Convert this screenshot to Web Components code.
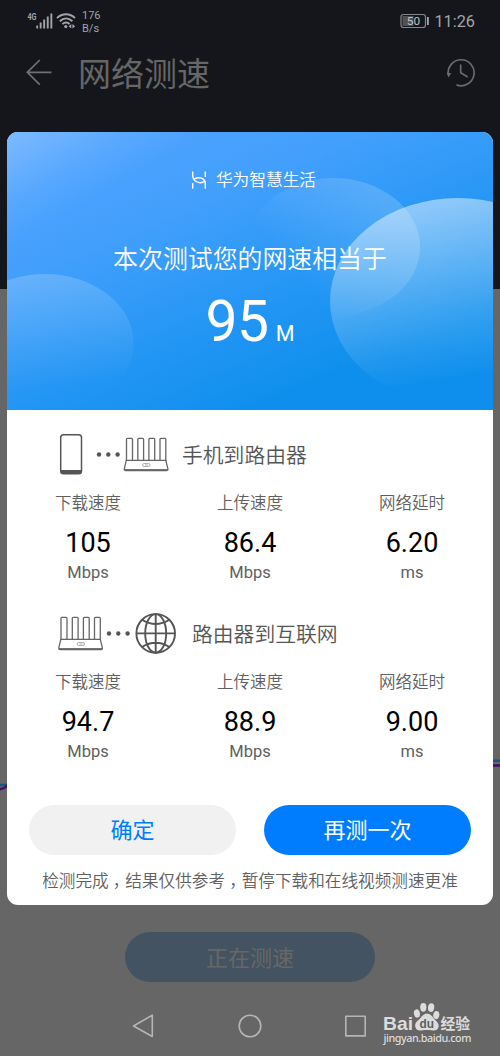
<!DOCTYPE html>
<html lang="zh-CN">
<head>
<meta charset="utf-8">
<title>网络测速</title>
<style>
html,body{margin:0;padding:0;overflow:hidden}
body{font-family:Roboto,"Noto Sans CJK SC",sans-serif;background:#666}
</style>
</head>
<body>
<speed-page></speed-page>
<script>
const define = (name, html) => {
  const t = document.createElement('template');
  t.innerHTML = html;
  customElements.define(name, class extends HTMLElement {
    constructor() {
      super();
      this.attachShadow({ mode: 'open' }).appendChild(t.content.cloneNode(true));
    }
  });
};

define('status-bar', `
<style>
:host{display:flex;height:42px;box-sizing:border-box;padding:0 25px 0 27px;align-items:center;color:#a3a4a6}
.rate{font-size:11px;line-height:13px;margin-left:5px;padding-top:1px}
.sp{flex:1}
.time{font-size:16.3px;line-height:20px;margin-left:5px;padding-top:1px}
svg{display:block}
text{font-family:Roboto,sans-serif}
</style>
<svg width="50" height="42" viewBox="27 0 50 42" fill="#a3a4a6">
  <text x="27.5" y="20" font-size="8.5" font-weight="700" textLength="9" lengthAdjust="spacingAndGlyphs">4G</text>
  <rect x="36.3" y="25.5" width="1.8" height="3"/><rect x="39.7" y="22.5" width="1.9" height="6"/><rect x="43.2" y="19.5" width="1.9" height="9"/><rect x="46.8" y="16.5" width="1.9" height="12"/><rect x="50.4" y="13.5" width="1.9" height="15"/>
  <g fill="none" stroke="#a3a4a6" stroke-width="1.9"><path d="M57 18.2C62 13 70 13 75 18.2M59.8 21.2c3.8-3.6 8.8-3.6 12.6 0M62.4 24c2.4-2 5-2 7.2 0"/></g>
  <circle cx="65.8" cy="26.6" r="1.6"/><path d="M71.3 24v4.6L68.6 26.3zM72.4 24v4.6l2.8-2.3z"/>
</svg>
<div class="rate">176<br>B/s</div>
<div class="sp"></div>
<svg width="29" height="16" viewBox="401 13 29 16">
  <rect x="402" y="14.5" width="24.5" height="13" rx="2.5" fill="none" stroke="#85868a" stroke-width="1.2"/>
  <rect x="403.5" y="16" width="11" height="10" fill="#505155"/>
  <rect x="428" y="17" width="1.800" height="8" fill="#a3a4a6"/>
  <text x="414.500" y="25.300" font-size="11.800" text-anchor="middle" fill="#c0c0c1">50</text>
</svg>
<div class="time">11:26</div>`);

define('title-bar', `
<style>
:host{display:flex;height:62px;padding:0 25px 0 26px;align-items:center;color:#666}
h1{margin:0 0 0 26px;padding-top:4px;font-size:33px;line-height:40px;font-weight:400;flex:1}
svg{display:block}
</style>
<svg width="26" height="28" viewBox="26 59 26 28" fill="none" stroke="#707072" stroke-width="1.700"><path d="M51.500 72.300H27.500M39.800 60 27.300 72.300 39.800 84.600"/></svg>
<h1>网络测速</h1>
<svg width="30" height="30" viewBox="445 58 30 30" fill="none" stroke="#6b6b6d" stroke-width="1.700"><path d="M448.300 75A13 13 0 1 1 456.500 84.900"/><path d="M460.700 64.500v8.200l7 4.200"/><path d="M446.800 72.500l4.500.7-3 4.300z" fill="#6b6b6d" stroke="none"/></svg>`);

define('trace-chart', `
<style>:host{display:block;height:643px}svg{display:block}</style>
<svg width="500" height="643" viewBox="0 289 500 643" fill="none" stroke-width="2.500">
  <path d="M0 785h12M490 760.800h10" stroke="#19557c"/>
  <path d="M0 789.300C4 789 5.500 787 8 785M490 765.600h10" stroke="#430b70"/>
</svg>`);

define('busy-button', `
<style>:host{display:block;width:250px;height:50px;box-sizing:border-box;padding-top:2px;line-height:50px;margin:0 auto;border-radius:25px;background:#445362;color:#686766;text-align:center;font-size:22px}</style>
<slot></slot>`);

define('nav-bar', `
<style>:host{display:block;height:60px;margin-top:14px}svg{display:block}</style>
<svg width="500" height="60" viewBox="0 996 500 60" fill="none" stroke="#b5b5b5" stroke-width="1.600" stroke-linejoin="round">
  <path d="M152.300 1015.200v21.300L133.500 1026z"/><circle cx="250" cy="1026" r="10.800"/><rect x="345.800" y="1016.300" width="19.400" height="19.600"/>
</svg>`);

define('site-mark', `
<style>
:host{display:block;width:94px;height:46px}
svg{display:block}
</style>
<svg width="94" height="46" viewBox="382 1000 94 46" fill="#dcdcdc">
  <text x="383" y="1029.500" font-family="Liberation Sans" font-size="18.500" font-weight="700" textLength="30" lengthAdjust="spacingAndGlyphs">Bai</text>
  <ellipse cx="416.800" cy="1013.500" rx="3" ry="4.200" transform="rotate(-12 416.800 1013)"/>
  <ellipse cx="423.300" cy="1007.300" rx="3.100" ry="4.400"/>
  <ellipse cx="431.200" cy="1007.500" rx="3.100" ry="4.400" transform="rotate(8 431 1007)"/>
  <ellipse cx="436.300" cy="1015" rx="3" ry="4.100" transform="rotate(10 436 1015)"/>
  <path d="M427 1013.500c-4 0-5.500 4-8.500 6.500-3 2.500-4 4.500-3 7.500 1.200 3.300 4 3.200 7 2.800 3-.5 6-.5 9 0 3.500.6 6 .2 7-3 .8-3-.8-5-3.500-7.500-2.500-2.500-4-6.300-8-6.300z"/>
  <text x="419.500" y="1027.800" font-family="Liberation Sans" font-size="12.500" font-weight="700" fill="#5e5e5e" textLength="14.500" lengthAdjust="spacingAndGlyphs">du</text>
  <text x="440.500" y="1028.500" font-family="Noto Sans CJK SC" font-size="14.800" font-weight="700" textLength="29.500">经验</text>
  <text x="383.500" y="1041.800" font-family="Noto Sans" font-size="10.800" font-weight="500" textLength="88">jingyan.baidu.com</text>
</svg>`);

define('result-hero', `
<style>
:host{display:grid;height:278px;color:#fff}
svg,.c{grid-area:1/1;display:block}
.c{display:flex;flex-direction:column;align-items:center;z-index:1}
.brand{display:flex;align-items:center;gap:9px;height:24px;margin-top:36px;padding-left:7px;font-size:16.700px;font-weight:350;line-height:24px}
.brand span{padding-top:1px}
.brand svg{margin-top:-2px}
.t{margin-top:50px;font-size:24.900px;line-height:36px;font-weight:350}
.n{display:flex;align-items:baseline;gap:7px;font-size:57px;line-height:68px;margin-top:10px;letter-spacing:-.5px}
.n small{font-size:21.500px;letter-spacing:0}
</style>
<svg width="486" height="278" viewBox="0 0 486 278">
  <defs>
    <linearGradient id="bg" gradientUnits="userSpaceOnUse" x1="120" y1="-20" x2="245" y2="280"><stop offset="0" stop-color="#50a3ff"/><stop offset=".35" stop-color="#429ffc"/><stop offset=".7" stop-color="#2496f4"/><stop offset="1" stop-color="#0e8fed"/></linearGradient>
    <linearGradient id="gl" gradientUnits="userSpaceOnUse" x1="0" y1="0" x2="52" y2="88"><stop offset="0" stop-color="#fff" stop-opacity=".25"/><stop offset=".6" stop-color="#fff" stop-opacity=".07"/><stop offset="1" stop-color="#fff" stop-opacity="0"/></linearGradient>
    <linearGradient id="a" x1=".4" y1="0" x2=".5" y2=".82"><stop offset="0" stop-color="#fff" stop-opacity=".19"/><stop offset="1" stop-color="#fff" stop-opacity="0"/></linearGradient>
    <linearGradient id="m" x1=".85" y1=".25" x2=".25" y2=".65"><stop offset="0" stop-color="#fff" stop-opacity=".17"/><stop offset="1" stop-color="#fff" stop-opacity="0"/></linearGradient>
    <linearGradient id="b" x1=".4" y1="0" x2=".58" y2=".86"><stop offset="0" stop-color="#fff" stop-opacity=".48"/><stop offset=".5" stop-color="#fff" stop-opacity=".23"/><stop offset="1" stop-color="#fff" stop-opacity="0"/></linearGradient>
  </defs>
  <rect width="486" height="278" fill="url(#bg)"/>
  <rect width="486" height="278" fill="url(#gl)"/>
  <ellipse cx="38" cy="211" rx="88.500" ry="69" fill="url(#a)"/>
  <ellipse cx="326" cy="115" rx="87" ry="69" fill="url(#m)"/>
  <ellipse cx="451" cy="169" rx="128" ry="103" fill="url(#b)"/>
</svg>
<div class="c">
  <div class="brand"><svg width="16" height="19" viewBox="191 170 16 19" fill="none" stroke="#fff" stroke-width="1.400"><path d="M192.700 171.500v4c0 4.500 3.500 7.300 7.500 7.300 2.500 0 4-1 4.500-2.500M205.300 188.800v-5c0-4.500-3.500-6-7-6-2.500 0-4 1-4.500 2.200M205.300 171.500v5.500M192.700 183v5.800"/></svg><span>华为智慧生活</span></div>
  <div class="t">本次测试您的网速相当于</div>
  <div class="n"><span>95</span><small>M</small></div>
</div>`);

define('metric-cell', `
<style>
:host{display:flex;flex-direction:column;align-items:center;color:#606060;width:162px}
.l{font-size:16.500px;line-height:24px;font-weight:350}
.v{font-size:27px;line-height:34px;color:#000;margin-top:10px}
.u{font-size:16.500px;line-height:20px;margin-top:3px}
</style>
<div class="l"><slot name="label"></slot></div><div class="v"><slot></slot></div><div class="u"><slot name="unit"></slot></div>`);

define('metric-group', `
<style>
:host{display:block;height:179px}
.h{display:flex;height:50px;align-items:center;color:#555;font-size:20.800px;line-height:30px;font-weight:350}
.h slot[name=title]{display:block;padding-top:4px}
.r{display:flex;margin-top:13px}
</style>
<div class="h"><slot name="icon"></slot><slot name="title"></slot></div><div class="r"><slot></slot></div>`);

const router = `<g fill="#fff" stroke="#666" stroke-width="1.300"><path d="M2.500 24V2.200q0-.9.900-.9h4.200q.9 0 .9.900V24M13.800 24V2.200q0-.9.900-.9h4q.9 0 .9.900V24M24.900 24V2.200q0-.9.900-.9h4q.9 0 .9.900V24M36 24V2.200q0-.9.900-.9h4q.9 0 .9.900V24"/><path d="M2.300 23.300h39.500l2.100 8.500q.3 1.900-1.400 1.900H1.700Q0 33.700.3 31.800z"/><path d="M.5 32.600h43" stroke-width="1"/><rect x="18.600" y="26.500" width="7.400" height="3" rx="1.500" stroke-width=".8" stroke="#999"/><path d="M21 28h3" stroke-width=".8" stroke="#999"/></g>`;

define('phone-router-icon', `
<style>:host{display:block;margin:0 13px 0 52px}svg{display:block}</style>
<svg width="110" height="50" viewBox="59 429 110 50">
  <rect x="60.700" y="434.700" width="20.800" height="39" rx="2.800" fill="#fff" stroke="#555" stroke-width="1.500"/><path d="M61 470h20.500v1.500q0 2.500-2.500 2.500H63.500Q61 474 61 471.500z" fill="#555"/>
  <g fill="#555"><circle cx="99" cy="454.500" r="2.200"/><circle cx="108.300" cy="454.500" r="2.200"/><circle cx="117.600" cy="454.500" r="2.200"/></g>
  <g transform="translate(124 437)">${router}</g>
</svg>`);

define('router-globe-icon', `
<style>:host{display:block;margin:0 15px 0 50px}svg{display:block}</style>
<svg width="120" height="50" viewBox="57 608 120 50">
  <g transform="translate(58.500 616)">${router}</g>
  <g fill="#555"><circle cx="109" cy="633.500" r="2.200"/><circle cx="118.300" cy="633.500" r="2.200"/><circle cx="127.600" cy="633.500" r="2.200"/></g>
  <g fill="none" stroke="#555" stroke-width="1.900"><circle cx="155.700" cy="633.400" r="19.300"/><ellipse cx="155.700" cy="633.400" rx="10.500" ry="19.300"/><path d="M155.700 614v39M136.400 633.400H175M142 619.800q13.700 8.500 27.400 0M142 647q13.700-8.500 27.400 0"/></g>
</svg>`);

define('pill-button', `
<style>
:host{display:block;width:207px;height:50px;box-sizing:border-box;padding-top:1px;border-radius:25px;background:#f1f1f1;color:#007dff;text-align:center;font-size:22px;line-height:50px}
:host([primary]){background:#007dff;color:#fff}
</style><slot></slot>`);

define('result-dialog', `
<style>
:host{display:block;width:486px;height:773px;background:#fff;border-radius:11px;overflow:hidden}
.groups{padding-top:19px}
.btns{display:flex;justify-content:space-between;margin:17.500px 22px 0}
.note{margin-top:15.500px;text-align:center;font-size:16.640px;line-height:24px;color:#606060;font-weight:350;white-space:nowrap}
.note i{font-style:normal;font-feature-settings:"halt";padding:0 4.160px}
</style>
<result-hero></result-hero>
<div class="groups">
<metric-group><phone-router-icon slot="icon"></phone-router-icon><span slot="title">手机到路由器</span>
<metric-cell><span slot="label">下载速度</span>105<span slot="unit">Mbps</span></metric-cell>
<metric-cell><span slot="label">上传速度</span>86.4<span slot="unit">Mbps</span></metric-cell>
<metric-cell><span slot="label">网络延时</span>6.20<span slot="unit">ms</span></metric-cell></metric-group>
<metric-group><router-globe-icon slot="icon"></router-globe-icon><span slot="title">路由器到互联网</span>
<metric-cell><span slot="label">下载速度</span>94.7<span slot="unit">Mbps</span></metric-cell>
<metric-cell><span slot="label">上传速度</span>88.9<span slot="unit">Mbps</span></metric-cell>
<metric-cell><span slot="label">网络延时</span>9.00<span slot="unit">ms</span></metric-cell></metric-group>
</div>
<div class="btns"><pill-button>确定</pill-button><pill-button primary>再测一次</pill-button></div>
<div class="note">检测完成<i>，</i>结果仅供参考<i>，</i>暂停下载和在线视频测速更准</div>`);

define('speed-page', `
<style>
:host{display:block;position:relative;width:500px;height:1056px;overflow:hidden;background:#666}
.top{height:289px;background:#14161b}
result-dialog{position:absolute;left:7px;top:132px}
site-mark{position:absolute;left:382px;top:1000px}
</style>
<div class="top"><status-bar></status-bar><title-bar></title-bar></div>
<trace-chart></trace-chart>
<busy-button>正在测速</busy-button>
<nav-bar></nav-bar>
<result-dialog></result-dialog>
<site-mark></site-mark>`);
</script>
</body>
</html>
